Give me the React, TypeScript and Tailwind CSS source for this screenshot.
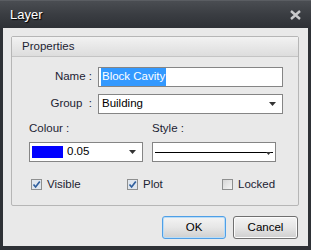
import React from 'react';

function Arrow() {
  return (
    <svg width="7" height="4" viewBox="0 0 7 4" className="shrink-0">
      <path d="M0 0 H7 L3.5 4 Z" fill="#333" />
    </svg>
  );
}

function Check({ checked, label }: { checked: boolean; label: string }) {
  return (
    <div className="flex items-center gap-[5px]">
      <div
        className={`w-[11px] h-[11px] border flex items-center justify-center ${
          checked ? 'border-[#8e8f8f] bg-[#dfe6ee]' : 'border-[#8e8f8f] bg-gradient-to-br from-[#d6d6d6] to-[#f4f4f4]'
        }`}
      >
        {checked && (
          <svg width="9" height="9" viewBox="0 0 9 9">
            <path d="M1.5 4.5 L3.6 7 L7.8 1.5" stroke="#2f5f9e" strokeWidth="1.7" fill="none" />
          </svg>
        )}
      </div>
      <span className="text-[#1c2333]">{label}</span>
    </div>
  );
}

export default function App() {
  return (
    <div
      className="w-[311px] h-[250px] flex flex-col bg-[#2e3136] text-[11.5px] leading-none"
      style={{ fontFamily: '"Liberation Sans", Arial, sans-serif' }}
    >
      <div className="h-[28px] shrink-0 flex items-center justify-between pl-[10px] pr-[10px] bg-gradient-to-b from-[#4a4d52] via-[#3a3d42] to-[#2e3136] border-t border-[#5a5d62]">
        <span className="text-white text-[13px] [text-shadow:1px_1px_1px_#000]">Layer</span>
        <svg width="11" height="10" viewBox="0 0 11 10">
          <path d="M1 1 L10 9 M10 1 L1 9" stroke="#c8c9cb" strokeWidth="2.4" />
        </svg>
      </div>

      <div className="flex-1 mx-[3px] mb-[4px] bg-[#e9e9e9] flex flex-col pt-[8px] pl-[8px]">
        <div className="w-[288px] h-[170px] border border-[#b6b6b6] rounded-[2px] flex flex-col">
          <div className="h-[20px] flex items-center pl-[10px] border-b border-[#c4c4c4] bg-gradient-to-b from-[#f2f2f2] to-[#dddddd] text-[#1c2333]">
            Properties
          </div>

          <div className="flex flex-col pt-[10px]">
            <div className="flex items-center h-[20px]">
              <span className="w-[80px] text-right text-[#1c2333]">Name :</span>
              <div className="ml-[6px] w-[185px] h-[20px] border border-[#858585] bg-white flex items-center pl-[2px]">
                <span className="bg-[#3399ff] text-white px-[1px] py-[3px]">Block Cavity</span>
              </div>
            </div>

            <div className="flex items-center h-[20px] mt-[7px]">
              <span className="w-[80px] text-right text-[#1c2333]">Group&nbsp; :</span>
              <div className="ml-[6px] w-[185px] h-[20px] border border-[#858585] bg-white flex items-center justify-between pl-[3px] pr-[6px]">
                <span className="text-black">Building</span>
                <Arrow />
              </div>
            </div>

            <div className="flex mt-[9px] pl-[17px] gap-[9px]">
              <div className="flex flex-col">
                <span className="text-[#1c2333] h-[15px]">Colour :</span>
                <div className="mt-[4px] w-[114px] h-[20px] border border-[#858585] bg-white flex items-center pl-[2px] pr-[6px]">
                  <div className="w-[31px] h-[12px] bg-[#0000ff]" />
                  <span className="ml-[4px] text-black flex-1">0.05</span>
                  <Arrow />
                </div>
              </div>
              <div className="flex flex-col">
                <span className="text-[#1c2333] h-[15px]">Style :</span>
                <div className="mt-[4px] w-[124px] h-[20px] border border-[#858585] bg-white flex items-center px-[2px] relative">
                  <div className="h-[1px] w-full bg-black" />
                  <svg width="5" height="3" viewBox="0 0 5 3" className="absolute right-[4px] top-[9px]">
                    <path d="M0 0 H5 L2.5 3 Z" fill="#333" />
                  </svg>
                </div>
              </div>
            </div>

            <div className="flex items-center mt-[17px] pl-[19px]">
              <div className="w-[96px]">
                <Check checked label="Visible" />
              </div>
              <div className="w-[95px]">
                <Check checked label="Plot" />
              </div>
              <Check checked={false} label="Locked" />
            </div>
          </div>
        </div>

        <div className="flex justify-end gap-[7px] mt-[10px] pr-[10px]">
          <button className="w-[64px] h-[23px] rounded-[3px] border border-[#4f9fe6] bg-gradient-to-b from-[#f4f4f4] via-[#e6e6e6] to-[#cfcfcf] text-black shadow-[inset_0_0_0_1px_#b9dcf7]">
            OK
          </button>
          <button className="w-[65px] h-[23px] rounded-[3px] border border-[#707070] bg-gradient-to-b from-[#f4f4f4] via-[#e6e6e6] to-[#cfcfcf] text-black shadow-[inset_0_0_0_1px_#fcfcfc]">
            Cancel
          </button>
        </div>
      </div>
    </div>
  );
}
